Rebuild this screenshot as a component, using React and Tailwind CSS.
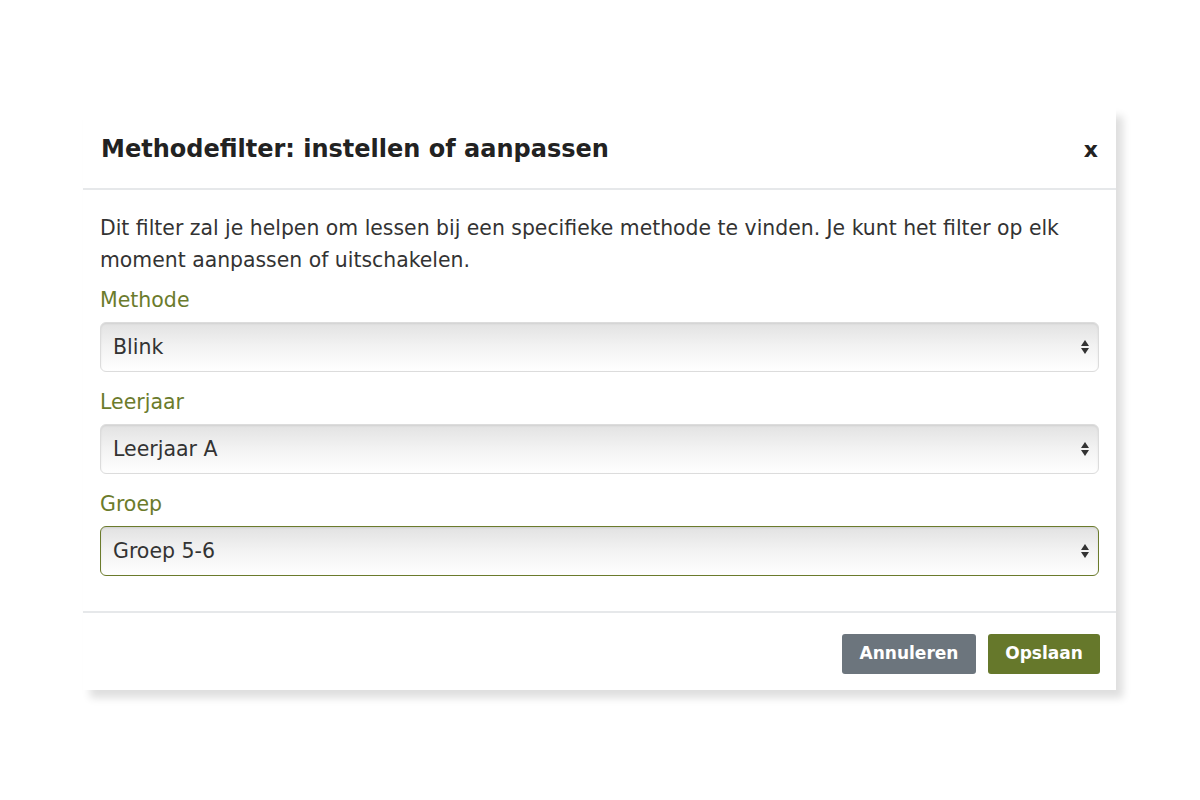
import React from "react";

/* Methodefilter modal – static recreation */

const font = { fontFamily: '"DejaVu Sans", "Noto Sans", sans-serif' };

function SelectBox({ value, active }) {
  return (
    <div
      className={
        "flex h-[50px] items-center justify-between rounded-[6px] border bg-gradient-to-b from-[#e2e2e2] via-[#f3f3f3] to-white pl-[12px] pr-[8px] shadow-[inset_0_1px_2px_rgba(0,0,0,0.08)] " +
        (active ? "border-[#6b7b2c] border-[1.5px]" : "border-[#dcdcdc]")
      }
    >
      <span className="text-[20.5px] text-[#333]">{value}</span>
      <svg width="10" height="16" viewBox="0 0 10 16" className="fill-[#333]">
        <path d="M5 1 L9 7 L1 7 Z" />
        <path d="M1 9 L9 9 L5 15 Z" />
      </svg>
    </div>
  );
}

function Label({ children, first }) {
  return (
    <div
      className={
        (first ? "mt-[8px]" : "mt-[14px]") +
        " text-[20.5px] leading-[32px] text-[#6b7b2c]"
      }
    >
      {children}
    </div>
  );
}

export default function App() {
  return (
    <div className="h-[800px] w-[1200px] bg-white pt-[108px] pl-[83px]" style={font}>
      <div className="w-[1033px] bg-white shadow-[7px_8px_8px_rgba(0,0,0,0.13)]">
        {/* === header === */}
        <div className="flex h-[82px] items-center justify-between border-b-2 border-[#e6e8ea] pl-[18px] pr-[18px] pt-[2px]">
          <h2 className="text-[24px] font-bold text-[#222]">
            Methodefilter: instellen of aanpassen
          </h2>
          <span className="text-[22px] font-bold text-[#222]">x</span>
        </div>

        {/* === body === */}
        <div className="px-[17px] pt-[22px] pb-[35px]">
          <p className="text-[20.4px] leading-[32px] text-[#333]">
            Dit filter zal je helpen om lessen bij een specifieke methode te vinden. Je kunt het filter op elk moment aanpassen of uitschakelen.
          </p>

          <Label first>Methode</Label>
          <div className="mt-[6px]">
            <SelectBox value="Blink" />
          </div>

          <Label>Leerjaar</Label>
          <div className="mt-[6px]">
            <SelectBox value="Leerjaar A" />
          </div>

          <Label>Groep</Label>
          <div className="mt-[6px]">
            <SelectBox value="Groep 5-6" active />
          </div>
        </div>

        {/* === footer === */}
        <div className="flex justify-end gap-[12px] border-t-2 border-[#e6e8ea] px-[16px] pt-[21px] pb-[16px]">
          <button className="h-[40px] w-[134px] rounded-[3px] bg-[#6c757d] text-[17px] font-bold text-white">
            Annuleren
          </button>
          <button className="h-[40px] w-[112px] rounded-[3px] bg-[#66782b] text-[17px] font-bold text-white">
            Opslaan
          </button>
        </div>
      </div>
    </div>
  );
}
